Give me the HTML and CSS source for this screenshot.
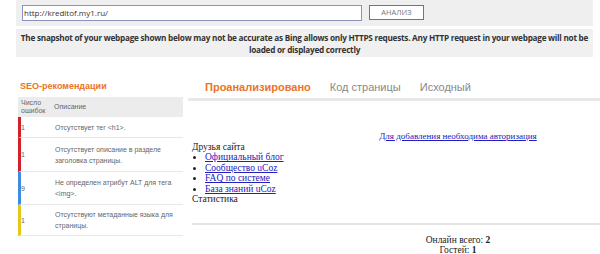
FILE: index.html
```html
<!DOCTYPE html>
<html>
<head>
<meta charset="utf-8">
<link rel="stylesheet" href="styles.css">
</head>
<body>
<div class="top">
  <div class="bar">
    <div class="url">http://kreditof.my1.ru/</div>
    <div class="btn">АНАЛИЗ</div>
  </div>
  <div class="notice">The snapshot of your webpage shown below may not be accurate as Bing allows only HTTPS requests. Any HTTP request in your webpage will not be<br>loaded or displayed correctly</div>
</div>
<div class="main">
  <div class="side">
    <div class="side-title">SEO-рекомендации</div>
    <div class="thead">
      <div class="c1">Число<br>ошибок</div>
      <div class="c2">Описание</div>
    </div>
    <div class="row red r1"><div class="c1">1</div><div class="c2">Отсутствует тег &lt;h1&gt;.</div></div>
    <div class="row red r2"><div class="c1">1</div><div class="c2">Отсутствует описание в разделе заголовка страницы.</div></div>
    <div class="row blue r3"><div class="c1">9</div><div class="c2">Не определен атрибут ALT для тега &lt;img&gt;.</div></div>
    <div class="row yellow r4"><div class="c1">1</div><div class="c2">Отсутствуют метаданные языка для страницы.</div></div>
  </div>
  <div class="content">
    <div class="tabs">
      <span class="tab active">Проанализировано</span>
      <span class="tab">Код страницы</span>
      <span class="tab">Исходный</span>
    </div>
    <div class="snap">
      <div class="auth"><a href="#">Для добавления необходима авторизация</a></div>
      <div class="friends">Друзья сайта</div>
      <ul>
        <li><a href="#">Официальный блог</a></li>
        <li><a href="#">Сообщество uCoz</a></li>
        <li><a href="#">FAQ по системе</a></li>
        <li><a href="#">База знаний uCoz</a></li>
      </ul>
      <div class="stat">Статистика</div>
      <div class="online">Онлайн всего: <b>2</b><br>Гостей: <b>1</b></div>
    </div>
  </div>
</div>
</body>
</html>
```
FILE: styles.css
```css
html, body {
  margin: 0;
  padding: 0;
  background: #fff;
  width: 600px;
  height: 254px;
  overflow: hidden;
}
body {
  font-family: "Open Sans", "Liberation Sans", sans-serif;
}
.top {
  margin-left: 16px;
  width: 577px;
}
.bar {
  background: #efefef;
  height: 26px;
  display: flex;
  align-items: flex-start;
  padding-top: 5px;
  box-sizing: border-box;
}
.url {
  margin-left: 6px;
  width: 340px;
  height: 16px;
  box-sizing: border-box;
  border: 1px solid #8c92c0;
  background: #fff;
  font-size: 8px;
  line-height: 14px;
  padding-left: 1px;
  color: #333;
}
.btn {
  margin-left: 7px;
  width: 55px;
  height: 15px;
  box-sizing: border-box;
  border: 1px solid #3c8f84;
  background: #fff;
  font-size: 7.5px;
  line-height: 13px;
  text-align: center;
  color: #777;
}
.notice {
  margin-top: 3px;
  background: #f0f0f0;
  height: 28px;
  box-sizing: border-box;
  padding: 3px 0 0;
  font-size: 8.2px;
  font-weight: 700;
  letter-spacing: -0.25px;
  line-height: 12px;
  text-align: center;
  color: #333;
  white-space: nowrap;
}
.main {
  display: flex;
}
.side {
  margin-left: 18px;
  width: 165px;
  flex: none;
  font-family: "Liberation Sans", Arial, sans-serif;
}
.side-title {
  margin-top: 24px;
  padding-left: 2px;
  height: 16px;
  font-size: 9px;
  font-weight: 700;
  color: #eb7324;
}
.thead {
  display: flex;
  background: #ececec;
  height: 20px;
  font-size: 7px;
  line-height: 8px;
  color: #666;
  align-items: center;
}
.thead .c1 { width: 34px; padding-left: 3px; box-sizing: border-box; }
.thead .c2 { padding-left: 2px; }
.row {
  display: flex;
  align-items: center;
  border-bottom: 1px solid #e8e8e8;
  border-left: 3px solid #d3212c;
  box-sizing: border-box;
  font-size: 7px;
  line-height: 11px;
  color: #666;
}
.row .c1 { width: 34px; box-sizing: border-box; flex: none; }
.row .c2 { padding-right: 10px; }
.r1 { height: 21px; }
.r2 { height: 34px; }
.r3 { height: 33px; }
.r4 { height: 31px; }
.red { border-left-color: #d3212c; }
.blue { border-left-color: #3c8de2; }
.yellow { border-left-color: #e6c81d; }
.content {
  flex: 1;
  margin-left: 5px;
}
.tabs {
  margin-top: 22px;
  height: 19px;
  border-bottom: 3px solid #e8e8e8;
  padding-left: 17px;
  display: flex;
  gap: 19px;
  font-family: "Liberation Sans", Arial, sans-serif;
  font-size: 11px;
  line-height: 16px;
  color: #888;
}
.tab.active {
  color: #eb7324;
  font-weight: 700;
  position: relative;
}
.tab.active::after {
  content: "";
  position: absolute;
  left: 50%;
  bottom: -6px;
  margin-left: -4px;
  border-left: 4px solid transparent;
  border-right: 4px solid transparent;
  border-bottom: 3px solid #fff;
}
.snap {
  font-family: "Liberation Serif", "Times New Roman", serif;
  font-size: 9.5px;
  line-height: 10.4px;
  color: #222;
  padding-left: 4px;
}
.snap a { color: #2020c0; }
.auth {
  margin-top: 30px;
  padding-left: 124px;
  text-align: center;
  height: 11px;
  font-size: 9px;
}
ul {
  margin: 0;
  padding-left: 13px;
  list-style: disc;
}
li { line-height: 10.4px; }
.stat { height: 29px; border-bottom: 2px solid #e4e4e4; }
.online {
  text-align: center;
  margin-top: 10px;
  padding-left: 124px;
  line-height: 10px;
  border-bottom: 2px solid #e4e4e4;
}
```
